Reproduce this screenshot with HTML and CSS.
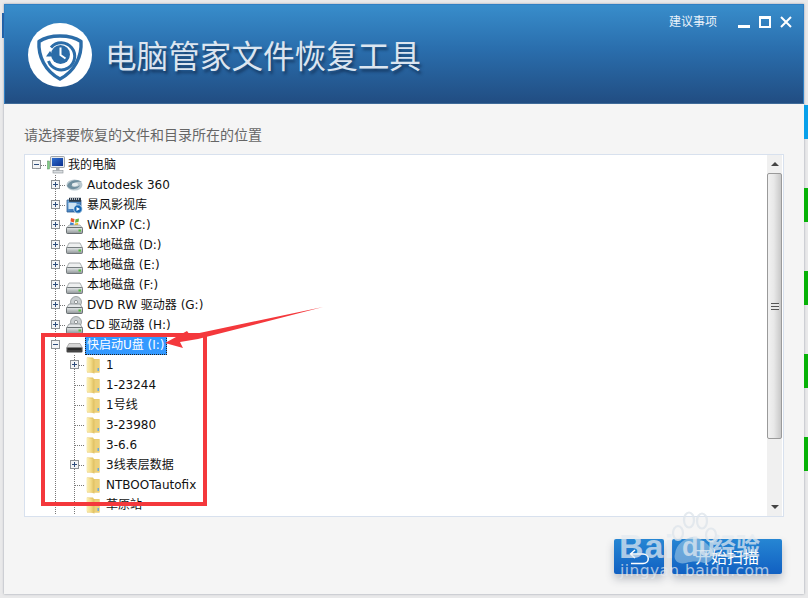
FILE: index.html
```html
<!DOCTYPE html>
<html lang="zh-CN">
<head>
<meta charset="utf-8">
<title>电脑管家文件恢复工具</title>
<link rel="stylesheet" href="styles.css">
</head>
<body>
<svg class="defs" width="0" height="0" aria-hidden="true">
  <defs>
    <linearGradient id="fold" x1="0" y1="0" x2="1" y2="0"><stop offset="0" stop-color="#fbf0b8"/><stop offset=".55" stop-color="#f4dc88"/><stop offset="1" stop-color="#dcbc5c"/></linearGradient>
    <linearGradient id="body" x1="0" y1="0" x2="0" y2="1"><stop offset="0" stop-color="#e6e9ea"/><stop offset="1" stop-color="#8f9698"/></linearGradient>
    <linearGradient id="blue" x1="0" y1="0" x2="1" y2="1"><stop offset="0" stop-color="#7fb3e0"/><stop offset="1" stop-color="#1d5fa8"/></linearGradient>
    <linearGradient id="screen" x1="0" y1="0" x2="1" y2="1"><stop offset="0" stop-color="#2f6fd0"/><stop offset="1" stop-color="#0b2f8f"/></linearGradient>
    <symbol id="i-folder" viewBox="0 0 16 18">
      <path d="M2 1.500 H8 L9 3 H14.500 V16.500 H2 Z" fill="#e6c869"/>
      <path d="M1.500 1.500 L9.500 3.500 V17.500 L1.500 15.500 Z" fill="url(#fold)"/>
      <path d="M9.500 3.500 H14.500 V16.500 H9.500 Z" fill="#ecd07a"/>
      <rect x="12.500" y="12" width="1.500" height="3" fill="#6aa7d8"/>
    </symbol>
    <symbol id="i-hdd" viewBox="0 0 17 12">
      <path d="M3 1 H14 L16.500 6 H.5 Z" fill="#eef0f0" stroke="#8a9092" stroke-width=".7"/>
      <rect x=".5" y="5.500" width="16" height="6" rx="1" fill="url(#body)" stroke="#5e6668" stroke-width=".8"/>
      <rect x="12.500" y="7.500" width="2.500" height="2" fill="#53c03c"/>
    </symbol>
    <symbol id="i-dvd" viewBox="0 0 17 18">
      <circle cx="10" cy="6" r="5.500" fill="#c9ced0" stroke="#7e8587" stroke-width=".7"/>
      <circle cx="10" cy="6" r="1.600" fill="#fff" stroke="#5f6668" stroke-width=".6"/>
      <path d="M3 8 H14 L16.500 12 H.5 Z" fill="#e4e7e8" stroke="#7e8587" stroke-width=".7"/>
      <rect x=".5" y="11.500" width="16" height="6" rx="1" fill="url(#body)" stroke="#4f5759" stroke-width=".8"/>
      <rect x="12.500" y="13.500" width="2.500" height="2" fill="#53c03c"/>
    </symbol>
    <symbol id="i-usb" viewBox="0 0 17 10">
      <path d="M3 .5 H14 L16.500 5 H.5 Z" fill="#d5d5d5" stroke="#888" stroke-width=".6"/>
      <rect x=".5" y="4.500" width="16" height="5" rx="1" fill="#444"/>
      <rect x="2" y="5.500" width="13" height="1" fill="#111"/>
    </symbol>
    <symbol id="i-pc" viewBox="0 0 18 18">
      <rect x=".5" y="5" width="2" height="8" fill="#7fcf86" stroke="#5c8d60" stroke-width=".5"/>
      <rect x="3.500" y=".5" width="14" height="11" rx="1" fill="#e6eaee" stroke="#8b9196" stroke-width=".8"/>
      <rect x="5" y="2" width="11" height="8" fill="url(#screen)"/>
      <rect x="9" y="11.500" width="3.500" height="3" fill="#a9aeb2"/>
      <rect x="6" y="14.500" width="10" height="2.500" fill="#d8dcdf" stroke="#8b9196" stroke-width=".6"/>
    </symbol>
    <symbol id="i-adsk" viewBox="0 0 17 14">
      <ellipse cx="8.500" cy="7" rx="8" ry="5.500" fill="#b9c8cf"/>
      <path d="M1 8 C3 2 12 .5 16 4 C12 3 7 4 5.500 7.500 C7 10 12 9 14 7 C13 11 5 13.500 1 8Z" fill="#6f8e9e"/>
      <ellipse cx="9" cy="6.500" rx="3" ry="1.700" fill="#e8eef0"/>
    </symbol>
    <symbol id="i-bf" viewBox="0 0 17 17">
      <path d="M1 3 H15 V15 H1 Z" fill="url(#blue)" stroke="#2d5e92" stroke-width=".8"/>
      <rect x="3" y=".8" width="12" height="4" fill="#2b3a4a"/>
      <path d="M4 2h1M6 2h1M8 2h1M10 2h1M12 2h1" stroke="#e5e5e5" stroke-width="1.400"/>
      <rect x="2.500" y="6" width="8" height="6" fill="#cfe3f3"/>
      <circle cx="12" cy="12" r="4.200" fill="#1767b3" stroke="#dcecf7" stroke-width=".8"/>
      <path d="M10.500 10 L14 12 L10.500 14 Z" fill="#fff"/>
    </symbol>
    <symbol id="i-xp" viewBox="0 0 17 17">
      <path d="M5 1 L8.500 2 L8 5.500 L4.500 4.500 Z" fill="#e8562c"/>
      <path d="M9.500 2.200 L13 1.500 L12.500 5 L9 5.700 Z" fill="#6ab43e"/>
      <path d="M4.300 5.300 L7.800 6.200 L7.400 9 L4 8.200 Z" fill="#3a83d0"/>
      <path d="M8.800 6.400 L12.300 5.800 L12 8.800 L8.400 9.300 Z" fill="#f2c32e"/>
      <path d="M3 8 H14 L16.500 11 H.5 Z" fill="#d9dedf" stroke="#8a9092" stroke-width=".6"/>
      <rect x=".5" y="10.500" width="16" height="6" rx="1" fill="url(#body)" stroke="#4f5759" stroke-width=".8"/>
      <rect x="12.500" y="12.500" width="2.500" height="2" fill="#53c03c"/>
    </symbol>
    <symbol id="i-plus" viewBox="0 0 9 9">
      <rect x=".5" y=".5" width="8" height="8" fill="#f3f4f5" stroke="#8e9296"/>
      <path d="M2 4.500 H7 M4.500 2 V7" stroke="#2e4d7c"/>
    </symbol>
    <symbol id="i-minus" viewBox="0 0 9 9">
      <rect x=".5" y=".5" width="8" height="8" fill="#f3f4f5" stroke="#8e9296"/>
      <path d="M2 4.500 H7" stroke="#2e4d7c"/>
    </symbol>
  </defs>
</svg>

<div class="desktop">
  <div class="left-edge"><span class="edge-tab"></span></div>
  <main class="window">
    <header class="header">
      <div class="logo">
        <svg width="64" height="64" viewBox="0 0 64 64" aria-hidden="true">
          <circle cx="32" cy="32" r="32" fill="#fff"/>
          <path d="M32 13 C41 13 48 15 53 18.500 C54 33 47 48 32 56 C17 48 10 33 11 18.500 C16 15 23 13 32 13 Z" fill="none" stroke="#2b6ca8" stroke-width="3.400" stroke-linejoin="round"/>
          <path d="M23 24.500 A13.500 13.500 0 1 1 20.500 38" fill="none" stroke="#2b6ca8" stroke-width="3"/>
          <path d="M18 28.500 H26 L22 34 Z" fill="#2b6ca8" transform="rotate(180 22 31)"/>
          <circle cx="32.500" cy="31.500" r="9.500" fill="#2b6ca8"/>
          <path d="M32.500 24.500 V32 L37.500 35.500" fill="none" stroke="#fff" stroke-width="2"/>
        </svg>
      </div>
      <h1 class="title">电脑管家文件恢复工具</h1>
      <div class="tools">
        <span class="advice">建议事项</span>
        <span class="win-btn"><svg width="12" height="12" viewBox="0 0 12 12" aria-hidden="true"><rect x="0" y="9" width="12" height="3" fill="#fff"/></svg></span>
        <span class="win-btn"><svg width="12" height="12" viewBox="0 0 12 12" aria-hidden="true"><rect x="1" y="1" width="10" height="10" fill="none" stroke="#fff" stroke-width="2"/><rect x="0" y="0" width="12" height="3" fill="#fff"/></svg></span>
        <span class="win-btn"><svg width="12" height="12" viewBox="0 0 12 12" aria-hidden="true"><path d="M1 1 L11 11 M11 1 L1 11" stroke="#fff" stroke-width="2"/></svg></span>
      </div>
    </header>
    <section class="content">
      <p class="prompt">请选择要恢复的文件和目录所在的位置</p>
      <div class="tree-box">
        <div class="tree">
          <div class="row"><span class="cell"><svg class="tg"><use href="#i-minus"/></svg><i class="dash"></i></span><span class="ico"><svg width="18" height="18"><use href="#i-pc"/></svg></span><span class="label">我的电脑</span></div>
          <div class="row"><span class="cell"></span><span class="cell v"><svg class="tg"><use href="#i-plus"/></svg><i class="dash"></i></span><span class="ico"><svg width="17" height="14"><use href="#i-adsk"/></svg></span><span class="label">Autodesk 360</span></div>
          <div class="row"><span class="cell"></span><span class="cell v"><svg class="tg"><use href="#i-plus"/></svg><i class="dash"></i></span><span class="ico"><svg width="17" height="17"><use href="#i-bf"/></svg></span><span class="label">暴风影视库</span></div>
          <div class="row"><span class="cell"></span><span class="cell v"><svg class="tg"><use href="#i-plus"/></svg><i class="dash"></i></span><span class="ico"><svg width="17" height="17"><use href="#i-xp"/></svg></span><span class="label">WinXP (C:)</span></div>
          <div class="row"><span class="cell"></span><span class="cell v"><svg class="tg"><use href="#i-plus"/></svg><i class="dash"></i></span><span class="ico low"><svg width="17" height="12"><use href="#i-hdd"/></svg></span><span class="label">本地磁盘 (D:)</span></div>
          <div class="row"><span class="cell"></span><span class="cell v"><svg class="tg"><use href="#i-plus"/></svg><i class="dash"></i></span><span class="ico low"><svg width="17" height="12"><use href="#i-hdd"/></svg></span><span class="label">本地磁盘 (E:)</span></div>
          <div class="row"><span class="cell"></span><span class="cell v"><svg class="tg"><use href="#i-plus"/></svg><i class="dash"></i></span><span class="ico low"><svg width="17" height="12"><use href="#i-hdd"/></svg></span><span class="label">本地磁盘 (F:)</span></div>
          <div class="row"><span class="cell"></span><span class="cell v"><svg class="tg"><use href="#i-plus"/></svg><i class="dash"></i></span><span class="ico"><svg width="17" height="18"><use href="#i-dvd"/></svg></span><span class="label">DVD RW 驱动器 (G:)</span></div>
          <div class="row"><span class="cell"></span><span class="cell v"><svg class="tg"><use href="#i-plus"/></svg><i class="dash"></i></span><span class="ico"><svg width="17" height="18"><use href="#i-dvd"/></svg></span><span class="label">CD 驱动器 (H:)</span></div>
          <div class="row"><span class="cell"></span><span class="cell v"><svg class="tg"><use href="#i-minus"/></svg></span><span class="ico low"><svg width="17" height="10"><use href="#i-usb"/></svg></span><span class="label selected">快启动U盘 (I:)</span></div>
          <div class="row"><span class="cell"></span><span class="cell v"></span><span class="cell v"><svg class="tg"><use href="#i-plus"/></svg><i class="dash"></i></span><span class="ico fold"><svg width="16" height="18"><use href="#i-folder"/></svg></span><span class="label">1</span></div>
          <div class="row"><span class="cell"></span><span class="cell v"></span><span class="cell v"><i class="dash"></i></span><span class="ico fold"><svg width="16" height="18"><use href="#i-folder"/></svg></span><span class="label">1-23244</span></div>
          <div class="row"><span class="cell"></span><span class="cell v"></span><span class="cell v"><i class="dash"></i></span><span class="ico fold"><svg width="16" height="18"><use href="#i-folder"/></svg></span><span class="label">1号线</span></div>
          <div class="row"><span class="cell"></span><span class="cell v"></span><span class="cell v"><i class="dash"></i></span><span class="ico fold"><svg width="16" height="18"><use href="#i-folder"/></svg></span><span class="label">3-23980</span></div>
          <div class="row"><span class="cell"></span><span class="cell v"></span><span class="cell v"><i class="dash"></i></span><span class="ico fold"><svg width="16" height="18"><use href="#i-folder"/></svg></span><span class="label">3-6.6</span></div>
          <div class="row"><span class="cell"></span><span class="cell v"></span><span class="cell v"><svg class="tg"><use href="#i-plus"/></svg><i class="dash"></i></span><span class="ico fold"><svg width="16" height="18"><use href="#i-folder"/></svg></span><span class="label">3线表层数据</span></div>
          <div class="row"><span class="cell"></span><span class="cell v"></span><span class="cell v"><i class="dash"></i></span><span class="ico fold"><svg width="16" height="18"><use href="#i-folder"/></svg></span><span class="label">NTBOOTautofix</span></div>
          <div class="row"><span class="cell"></span><span class="cell v"></span><span class="cell v"><i class="dash"></i></span><span class="ico fold"><svg width="16" height="18"><use href="#i-folder"/></svg></span><span class="label">草原站</span></div>
        </div>
        <div class="scrollbar">
          <span class="arrow up"></span>
          <div class="track">
            <div class="thumb"><span class="grip"></span></div>
          </div>
          <span class="arrow down"></span>
        </div>
      </div>
      <div class="actions">
        <button class="btn back" type="button" aria-label="返回">
          <svg width="20" height="16" viewBox="0 0 20 16" aria-hidden="true"><path d="M6 1 L1.500 5 L6 9 M2 5 H14 C21 5 21 14.500 14 14.500 H2" fill="none" stroke="#fff" stroke-width="1.500"/></svg>
        </button>
        <button class="btn start" type="button">开始扫描</button>
      </div>
    </section>
  </main>
  <div class="right-edge">
    <span class="seg tone-blue"></span>
    <span class="seg tone-green"></span>
    <span class="seg tone-green"></span>
    <span class="seg tone-green"></span>
    <span class="seg tone-green"></span>
  </div>
</div>

<div class="mark-box"></div>
<svg class="mark-arrow" width="170" height="60" viewBox="160 300 170 60" aria-hidden="true">
  <path d="M165 343 L187 331 L190 335 L323 307 L198 339 L180 342 L183 348 Z" fill="#f4383c"/>
</svg>
<div class="watermark">
  <span class="wm-bai">Bai</span>
  <svg class="paw" width="58" height="58" viewBox="0 0 58 58" aria-hidden="true">
    <g fill="none" stroke="#dfe6ec" stroke-width="2.200"><ellipse cx="10" cy="23" rx="5" ry="7"/><ellipse cx="21" cy="10" rx="5" ry="7.500"/><ellipse cx="34" cy="11" rx="5" ry="7.500"/><ellipse cx="43" cy="25" rx="5" ry="6.500"/></g>
    <path d="M7 44 C8 34 17 28 25 27 C33 27 39 34 43 38 C48 45 44 54 36 53 C29 51 25 51 18 53 C10 55 5 50 7 44Z" fill="#9fc7e4" opacity=".75"/>
  </svg>
  <span class="wm-du">du</span>
  <span class="wm-cn">经验</span>
  <span class="wm-url">jingyan.baidu.com</span>
</div>
</body>
</html>
```
FILE: styles.css
```css
* { box-sizing: border-box; }
html, body { margin: 0; padding: 0; }
body {
  width: 808px;
  height: 598px;
  overflow: hidden;
  background: #e9e9ea;
  font-family: "DejaVu Sans", "Noto Sans CJK SC", sans-serif;
  position: relative;
}
.defs { position: absolute; }
.desktop { display: flex; height: 598px; padding: 4px 0; }
.left-edge { width: 4px; flex: none; padding-top: 9px; }
.edge-tab { display: block; width: 2px; height: 25px; margin-left: 2px; background: #1d62ad; }
.window {
  width: 800px;
  flex: none;
  display: flex;
  flex-direction: column;
  background: #f5f5f5;
  box-shadow: 0 0 2px rgba(90, 100, 120, .6);
}
.header {
  height: 100px;
  flex: none;
  display: flex;
  align-items: flex-start;
  padding: 18px 0 0 23px;
  position: relative;
  border: 1px solid #2f7fc4;
  border-bottom-color: #3f6b99;
  background: linear-gradient(#388dcb 0%, #2a6ead 45%, #214d82 100%);
}
.logo { width: 64px; height: 64px; flex: none; line-height: 0; }
.title {
  margin: 13px 0 0 13px;
  font: 400 31.600px/36px "Noto Sans CJK SC", sans-serif;
  color: #dbe5f0;
  text-shadow: 2px 3px 3px rgba(10, 30, 60, .6);
}
.tools {
  display: flex;
  align-items: center;
  gap: 9px;
  padding: 6px 5px 0 0;
  position: absolute;
  top: 0;
  right: 6px;
  color: #fff;
}
.advice { font: 12px/20px "Noto Sans CJK SC", sans-serif; margin-right: 12px; color: #eaf3fb; }
.win-btn { width: 12px; height: 12px; margin-top: 1px; line-height: 0; }
.content { flex: 1; padding: 20px 20px 0 20px; display: flex; flex-direction: column; }
.prompt {
  margin: 0 0 10px;
  font: 14px/20px "Noto Sans CJK SC", sans-serif;
  color: #666;
}
.tree-box {
  height: 363px;
  flex: none;
  display: flex;
  background: #fff;
  border: 1px solid #d8e1ee;
}
.tree { flex: 1; padding: 0 0 0 2px; overflow: hidden; }
.row {
  height: 20px;
  display: flex;
  align-items: stretch;
  font-size: 12px;
  color: #111;
}
.cell {
  width: 19px;
  flex: none;
  position: relative;
  display: block;
}
.cell.v::before {
  content: "";
  position: absolute;
  left: 9px;
  top: 0;
  bottom: 0;
  width: 1px;
  background: repeating-linear-gradient(#777 0 1px, transparent 1px 2px);
}
.tg {
  position: absolute;
  left: 5px;
  top: 5px;
  width: 9px;
  height: 9px;
  z-index: 1;
}
.dash {
  position: absolute;
  left: 10px;
  right: -1px;
  top: 10px;
  height: 1px;
  background: repeating-linear-gradient(90deg, #777 0 1px, transparent 1px 2px);
}
.ico {
  width: 20px;
  flex: none;
  display: flex;
  align-items: center;
  padding-left: 1px;
  line-height: 0;
}
.ico.low { padding-top: 5px; }
.label {
  padding: 0 2px;
  line-height: 20px;
  white-space: nowrap;
}
.selected {
  height: 19px;
  margin-top: 1px;
  line-height: 18px;
  background: #3399ff;
  color: #fff;
  outline: 1px dotted #222;
  outline-offset: -1px;
}
.scrollbar {
  width: 15px;
  flex: none;
  margin-right: 1px;
  display: flex;
  flex-direction: column;
  background: #f0f0f0;
}
.arrow {
  height: 18px;
  flex: none;
  display: flex;
  align-items: center;
  justify-content: center;
}
.arrow::after {
  content: "";
  border-left: 4px solid transparent;
  border-right: 4px solid transparent;
}
.arrow.up::after { border-bottom: 4px solid #444; }
.arrow.down::after { border-top: 4px solid #444; }
.track { flex: 1; }
.thumb {
  height: 266px;
  border: 1px solid #9a9a9a;
  border-radius: 2px;
  background: linear-gradient(90deg, #f1f1f1 0%, #e8e8e8 45%, #c8c8c8 100%);
  display: flex;
  align-items: center;
  justify-content: center;
}
.grip {
  width: 8px;
  height: 7px;
  background: repeating-linear-gradient(#555 0 1px, #e8e8e8 1px 3px);
}
.actions {
  display: flex;
  justify-content: flex-end;
  gap: 8px;
  padding: 22px 2px 0 0;
}
.btn {
  height: 35px;
  border: 0;
  border-radius: 2px;
  padding: 0;
  color: #fff;
  background: linear-gradient(#2686d3, #1160c2);
  box-shadow: 0 5px 8px rgba(60, 70, 90, .3);
}
.btn.back { width: 50px; line-height: 0; }
.btn.start {
  width: 110px;
  font: 16px/35px "Noto Sans CJK SC", sans-serif;
}
.right-edge {
  width: 4px;
  flex: none;
  display: flex;
  flex-direction: column;
  gap: 49px;
  padding-top: 101px;
}
.seg { display: block; height: 34px; }
.tone-blue { background: #08a0ea; }
.tone-green { background: #07b207; }
.mark-box {
  position: absolute;
  left: 41px;
  top: 333px;
  width: 166px;
  height: 173px;
  border: 4px solid #f4383c;
}
.mark-arrow { position: absolute; left: 160px; top: 300px; }
.watermark { position: absolute; left: 0; top: 0; width: 808px; height: 598px; color: rgba(228, 235, 241, .72); pointer-events: none; }
.wm-bai {
  position: absolute;
  left: 619px;
  top: 528px;
  font: 700 34px/36px "Liberation Sans", sans-serif;
  letter-spacing: 1px;
}
.paw { position: absolute; left: 668px; top: 510px; opacity: .8; }
.wm-du {
  position: absolute;
  left: 682px;
  top: 532px;
  font: 700 27px/30px "Liberation Sans", sans-serif;
}
.wm-cn { position: absolute; left: 712px; top: 530px; font: 700 24px/30px "Noto Sans CJK SC", sans-serif; }
.wm-url { position: absolute; left: 620px; top: 561px; font: 15.500px/20px "DejaVu Sans", sans-serif; letter-spacing: .4px; }
```
